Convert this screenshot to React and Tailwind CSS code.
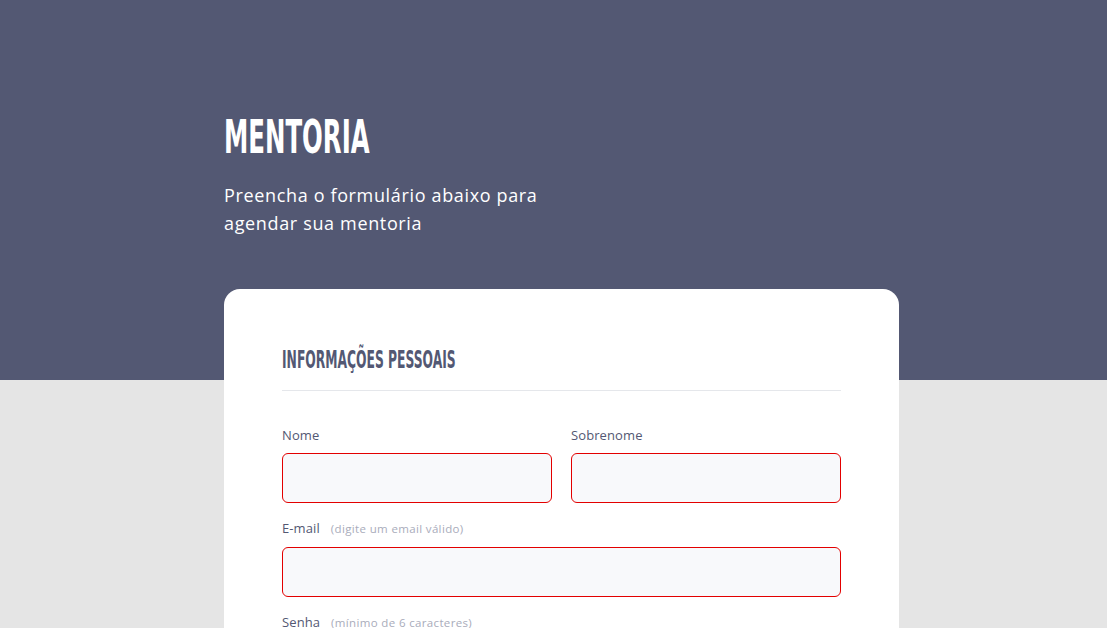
import React from 'react';

const condensed = { fontFamily: '"Liberation Sans Narrow", "DejaVu Sans Condensed", "Liberation Sans", sans-serif' };

const Field = ({ label, hint, className = '' }) => (
  <div className={className}>
    <label className="flex items-baseline text-[13px] leading-5 tracking-[0.1px] text-[#535873]">
      {label}
      {hint && <span className="ml-[11px] text-[11.5px] tracking-[0.35px] text-[#a9acbb]">{hint}</span>}
    </label>
    <input
      type="text"
      className="mt-2 block h-[50px] w-full rounded-md border border-[#e30000] bg-[#f8f9fb] px-3 outline-none"
    />
  </div>
);

export default function App() {
  return (
    <div
      className="min-h-screen bg-[linear-gradient(to_bottom,#535873_380px,#e5e5e5_380px)]"
      style={{ fontFamily: '"Open Sans", "Noto Sans", sans-serif' }}
    >
      <div className="ml-[224px] w-[675px] pt-[114px]">
        {/* Header */}
        <h1
          className="origin-left scale-x-[0.59] text-[46px] font-bold leading-none text-white"
          style={condensed}
        >
          MENTORIA
        </h1>
        <p className="mt-[21px] w-[340px] text-[18px] leading-[28px] tracking-[0.65px] text-white">
          Preencha o formulário abaixo para agendar sua mentoria
        </p>

        {/* Card */}
        <div className="mt-[52px] rounded-2xl bg-white px-[58px] pt-[59px] pb-10">
          <div className="border-b border-[#e5e7eb] pb-[18px]">
            <h2
              className="origin-left scale-x-[0.57] text-[24px] font-bold leading-none text-[#535873]"
              style={condensed}
            >
              INFORMAÇÕES PESSOAIS
            </h2>
          </div>

          <div className="mt-[34px] grid grid-cols-2 gap-x-[19px] gap-y-[15px]">
            <Field label="Nome" />
            <Field label="Sobrenome" />
            <Field label="E-mail" hint="(digite um email válido)" className="col-span-2" />
            <Field label="Senha" hint="(mínimo de 6 caracteres)" className="col-span-2" />
          </div>
        </div>
      </div>
    </div>
  );
}
